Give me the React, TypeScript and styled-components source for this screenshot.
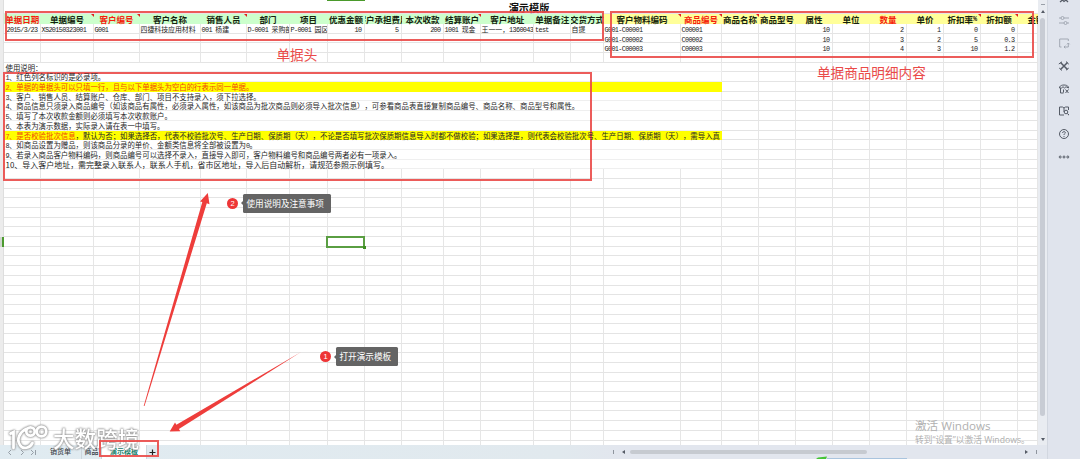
import React from 'react';
import styled, { createGlobalStyle, css } from 'styled-components';

const RED = '#ea4a48';
const COLS = [36.5, 53, 46, 61, 46, 43, 38, 37, 37, 42, 37, 53.5, 36.5, 33, 77, 41, 37, 37, 37, 37, 37, 37, 37, 37, 20.5];
const ROW_H = 9.7;

const Global = createGlobalStyle`
  * { box-sizing: border-box; }
  body {
    margin: 0;
    overflow: hidden;
    font-family: "Noto Sans CJK SC", sans-serif;
    text-spacing-trim: space-all;
  }
`;

const Window = styled.div`
  position: relative;
  display: flex;
  width: 1080px;
  height: 459px;
  overflow: hidden;
  background: #fff;
`;

const Main = styled.div`
  display: flex;
  flex-direction: column;
  width: 1047px;
  height: 459px;
`;

const Upper = styled.div`
  display: flex;
  height: 445px;
  overflow: hidden;
`;

const RowHeads = styled.div`
  flex: none;
  width: 4px;
  padding-top: 237px;
  background: #ececec;
  border-right: 1px solid #dedede;
`;

const ActiveRowMark = styled.div`
  width: 4px;
  height: 10px;
  background: #cfd6cf;
  border-right: 2px solid #4c9a2f;
`;

const Sheet = styled.div`
  width: 1034px;
  flex: none;
  overflow: hidden;
`;

const Title = styled.div`
  height: 14.3px;
  padding-left: 16px;
  border-bottom: 1px solid #e6e6e6;
  text-align: center;
  font-size: 10.2px;
  font-weight: 700;
  line-height: 15.4px;
  color: #111;
`;

const Row = styled.div`
  display: grid;
  grid-template-columns: ${COLS.map((c) => `${c}px`).join(' ')};
  height: ${ROW_H}px;
`;

type CellProps = { $align?: 'left' | 'right' };
const Cell = styled.div<CellProps>`
  height: ${ROW_H}px;
  min-width: 0;
  padding: 0 2px 0 1px;
  overflow-x: clip;
  overflow-y: visible;
  white-space: nowrap;
  border-right: 1px solid #e6e6e6;
  border-bottom: 1px solid #e4e4e4;
  font-size: 6.9px;
  line-height: 10.4px;
  color: #222;
  text-align: ${(p) => p.$align ?? 'left'};
`;

const Latin = styled.span`
  font-family: "Liberation Mono", monospace;
  font-size: 6.8px;
  letter-spacing: -0.64px;
`;

const HeadCell = styled.div<{ $bg: string; $red?: boolean; $note?: boolean }>`
  position: relative;
  display: flex;
  justify-content: center;
  height: ${ROW_H}px;
  min-width: 0;
  overflow-x: clip;
  overflow-y: visible;
  white-space: nowrap;
  background: ${(p) => p.$bg};
  color: ${(p) => (p.$red ? '#f5200c' : '#15230f')};
  font-size: 8.5px;
  font-weight: 700;
  line-height: 11px;
  &:last-child {
    justify-content: flex-start;
    padding-left: 10px;
  }
  ${(p) =>
    p.$note &&
    css`
      &::after {
        content: '';
        position: absolute;
        top: 0;
        right: 0;
        border-top: 3px solid #e02020;
        border-left: 3px solid transparent;
      }
    `}
`;

const Note = styled.div<{ $yellow?: boolean; $red?: boolean; $size?: number }>`
  grid-column: 1 / 17;
  height: ${ROW_H}px;
  padding-left: 1.5px;
  overflow-x: clip;
  overflow-y: visible;
  white-space: nowrap;
  font-size: ${(p) => p.$size ?? 7.41}px;
  line-height: 10.8px;
  color: ${(p) => (p.$red ? '#f0480a' : '#262626')};
  background: ${(p) => (p.$yellow ? '#ffff00' : '#fff')};
  border-bottom: 1px solid ${(p) => (p.$yellow ? '#ffff00' : '#efefef')};
  border-right: 1px solid ${(p) => (p.$yellow ? '#ffff00' : '#ebebeb')};
`;

const NoteText = styled.span`
  position: relative;
  z-index: 1;
`;

const Warm = styled.span`
  color: #f0480a;
`;

const VScroll = styled.div`
  display: flex;
  flex-direction: column;
  align-items: center;
  justify-content: space-between;
  width: 9px;
  padding: 4px 0 4px;
  background: #e9ecf1;
`;

const VTop = styled.div`
  display: flex;
  flex-direction: column;
  align-items: center;
`;

const Dash = styled.div`
  width: 4px;
  height: 1px;
  background: #9aa0a8;
  margin-bottom: 5px;
`;

const Tri = styled.div<{ $dir: 'up' | 'down' | 'left' | 'right' }>`
  width: 0;
  height: 0;
  border: 2px solid transparent;
  border-${(p) => ({ up: 'bottom', down: 'top', left: 'right', right: 'left' })[p.$dir]}: 3px solid #555b66;
  border-${(p) => ({ up: 'top', down: 'bottom', left: 'left', right: 'right' })[p.$dir]}: 0;
`;

const VThumb = styled.div`
  width: 5px;
  height: 398px;
  margin-top: 5px;
  border-radius: 3px;
  background: #c8ccd4;
`;

const Bottom = styled.div`
  display: flex;
  align-items: center;
  height: 14px;
  padding-left: 7px;
  background: linear-gradient(90deg, #e0ebf1 0, #e1e9ee 560px, #e2e6ee 620px);
`;

const NavIcons = styled.svg`
  width: 33px;
  height: 9px;
  flex: none;
`;

const Tab = styled.div<{ $w: number; $active?: boolean }>`
  width: ${(p) => p.$w}px;
  height: 14px;
  flex: none;
  text-align: center;
  white-space: nowrap;
  font-size: 7px;
  line-height: 13.4px;
  font-weight: ${(p) => (p.$active ? 700 : 500)};
  color: ${(p) => (p.$active ? '#12806a' : '#3b4147')};
  background: ${(p) => (p.$active ? '#fff' : 'transparent')};
  border-right: 1px solid #ccd6dc;
`;

const Plus = styled.svg`
  width: 7px;
  height: 7px;
  margin-left: 2px;
  flex: none;
`;

const HBar = styled.div`
  display: flex;
  align-items: center;
  width: 424px;
  margin-left: 457px;
`;

const Tick = styled.div`
  width: 1px;
  height: 4px;
  background: #8f959e;
`;

const Gap = styled.div`
  width: 8px;
`;

const HThumb = styled.div`
  width: 239px;
  height: 4px;
  margin: 0 158px 0 5px;
  border-radius: 2px;
  background: #c6cad0;
`;

const Rail = styled.div`
  display: flex;
  flex-direction: column;
  align-items: center;
  width: 33px;
  background: #e0e4ed;
  border-left: 1px solid #d2d7e0;
`;

const RailIcon = styled.svg<{ $faint?: boolean }>`
  position: relative;
  top: -4.5px;
  width: 10px;
  height: 10px;
  margin-bottom: 12.8px;
  flex: none;
  overflow: visible;
  fill: none;
  stroke: ${(p) => (p.$faint ? '#a2a8b3' : '#555b66')};
  stroke-width: 1;
`;

const Box = styled.div<{ $x: number; $y: number; $w: number; $h: number }>`
  position: absolute;
  left: ${(p) => p.$x}px;
  top: ${(p) => p.$y}px;
  width: ${(p) => p.$w}px;
  height: ${(p) => p.$h}px;
  border: 2px solid ${RED};
  opacity: 0.9;
`;

const Label = styled.div<{ $x: number; $y: number }>`
  position: absolute;
  left: ${(p) => p.$x}px;
  top: ${(p) => p.$y}px;
  font-size: 13.6px;
  line-height: 16px;
  white-space: nowrap;
  color: ${RED};
`;

const Callout = styled.div<{ $x: number; $y: number }>`
  position: absolute;
  left: ${(p) => p.$x}px;
  top: ${(p) => p.$y}px;
  display: flex;
  align-items: center;
`;

const Badge = styled.div`
  width: 11px;
  height: 11px;
  margin-right: 5px;
  border-radius: 50%;
  background: #ee3536;
  color: #fff;
  font: 7.5px/11px "Liberation Sans", sans-serif;
  text-align: center;
`;

const Tip = styled.div<{ $w: number }>`
  position: relative;
  width: ${(p) => p.$w}px;
  height: 19px;
  padding-left: 3.5px;
  border-radius: 1.5px;
  background: #646464;
  color: #fff;
  font-size: 8.6px;
  line-height: 18px;
  white-space: nowrap;
  &::before {
    content: '';
    position: absolute;
    left: -2.5px;
    top: 7.5px;
    border: 2px solid transparent;
    border-left: 0;
    border-right: 2.5px solid #646464;
  }
`;

const Selection = styled.div`
  position: absolute;
  left: 326px;
  top: 236px;
  width: 39px;
  height: 12px;
  border: 2px solid #5a9e42;
  &::after {
    content: '';
    position: absolute;
    right: -3px;
    bottom: -3px;
    width: 3px;
    height: 3px;
    background: #3f8f22;
  }
`;

const TopMark = styled.div`
  position: absolute;
  left: 327px;
  top: 0;
  width: 38px;
  height: 1px;
  background: #4a9a2b;
`;

const Arrows = styled.svg`
  position: absolute;
  left: 0;
  top: 0;
  width: 1080px;
  height: 459px;
  pointer-events: none;
`;

const Activate = styled.div`
  position: absolute;
  left: 915px;
  top: 418px;
  color: #b0b0b0;
  white-space: nowrap;
  font-family: "Open Sans", "Noto Sans CJK SC", sans-serif;
  font-size: 11.6px;
  line-height: 16px;
`;

const ActivateSub = styled.div`
  font-size: 8.7px;
  line-height: 12px;
`;

const Brand = styled.div`
  position: absolute;
  left: 8px;
  top: 422px;
  display: flex;
  align-items: center;
  color: #fff;
  font-size: 21.6px;
  line-height: 32px;
  font-weight: 500;
  white-space: nowrap;
  filter: drop-shadow(0 0 0.8px #8c8c8c) drop-shadow(0 0 0.7px #a0a0a0);
`;

const BrandLogo = styled.svg`
  width: 42px;
  height: 28px;
  margin-right: 3px;
  fill: none;
  stroke: #fff;
  stroke-width: 2.8;
  stroke-linecap: round;
`;

const G = '#ccffcc';
const Y = '#ffff99';
type Head = [string, string, boolean?, boolean?];
const HEADS: Head[] = [
  ['单据日期', G, true],
  ['单据编号', G, false, true],
  ['客户编号', G, true, true],
  ['客户名称', G],
  ['销售人员', G, false, true],
  ['部门', G],
  ['项目', G],
  ['优惠金额', G],
  ['客户承担费用', G],
  ['本次收款', G],
  ['结算账户', G, false, true],
  ['客户地址', G],
  ['单据备注', G],
  ['交货方式', G],
  ['客户物料编码', Y, false, true],
  ['商品编号', Y, true, true],
  ['商品名称', Y, false, true],
  ['商品型号', Y],
  ['属性', Y],
  ['单位', Y],
  ['数量', Y, true],
  ['单价', Y],
  ['折扣率%', Y, false, true],
  ['折扣额', Y, false, true],
  ['金额', Y],
];

const DATA: Record<number, string>[] = [
  {
    0: '2015/3/23', 1: 'XS20150323001', 2: 'G001', 3: '四捷科技应用材料', 4: '001 杨建', 5: 'D-0001 采购部',
    6: 'P-0001 园区', 7: '10', 8: '5', 9: '200', 10: '1001 现金', 11: '王一一，1360043', 12: 'test', 13: '自提',
    14: 'G001-C00001', 15: 'C00001', 18: '10', 20: '2', 21: '1', 22: '0', 23: '0',
  },
  { 14: 'G001-C00002', 15: 'C00002', 18: '10', 20: '3', 21: '2', 22: '5', 23: '0.3' },
  { 14: 'G001-C00003', 15: 'C00003', 18: '10', 20: '4', 21: '3', 22: '10', 23: '1.2' },
  {},
];

const RIGHT = new Set([0, 7, 8, 9, 18, 20, 21, 22, 23]);

const Mixed = ({ text }: { text: string }) => (
  <>
    {text.split(/([\x20-\x7e]+)/).map((part, i) => (i % 2 ? <Latin key={i}>{part}</Latin> : part))}
  </>
);

type NoteRow = { text: string; warm?: string; yellow?: boolean; red?: boolean; size?: number };
const NOTES: NoteRow[] = [
  { text: '1、红色列名标识的是必录项。' },
  { text: '2、单据的单据头可以只填一行，且与以下单据头为空白的行表示同一单据。', yellow: true, red: true },
  { text: '3、客户、销售人员、结算账户、仓库、部门、项目不支持录入，须下拉选择。' },
  { text: '4、商品信息只须录入商品编号（如该商品有属性，必须录入属性，如该商品为批次商品则必须导入批次信息），可参看商品表直接复制商品编号、商品名称、商品型号和属性。' },
  { text: '5、填写了本次收款金额则必须填写本次收款账户。' },
  { text: '6、本表为演示数据，实际录入请在表一中填写。' },
  { warm: '7、是否校验批次信息', text: '，默认为否；如果选择否，代表不校验批次号、生产日期、保质期（天），不论是否填写批次保质期信息导入时都不做校验；如果选择是，则代表会校验批次号、生产日期、保质期（天），需导入真', yellow: true },
  { text: '8、如商品设置为赠品，则该商品分录的单价、金额类信息将全部被设置为0。' },
  { text: '9、若录入商品客户物料编码，则商品编号可以选择不录入，直接导入即可，客户物料编号和商品编号两者必有一项录入。' },
  { text: '10、导入客户地址，需完整录入联系人，联系人手机，省市区地址，导入后自动解析，请规范参照示例填写。', size: 7.98 },
];

const range = (n: number) => Array.from({ length: n }, (_, i) => i);

const EmptyCells = ({ from = 0 }: { from?: number }) => (
  <>
    {range(COLS.length - from).map((i) => (
      <Cell key={i} />
    ))}
  </>
);

export default function App() {
  return (
    <Window>
      <Global />
      <Main>
        <Upper>
          <RowHeads>
            <ActiveRowMark />
          </RowHeads>
          <Sheet>
            <Title>演示模版</Title>
            <Row>
              {HEADS.map(([label, bg, red, note], i) => (
                <HeadCell key={i} $bg={bg} $red={red} $note={note}>
                  <Mixed text={label} />
                </HeadCell>
              ))}
            </Row>
            {DATA.map((row, r) => (
              <Row key={r}>
                {COLS.map((_, c) => (
                  <Cell key={c} $align={RIGHT.has(c) ? 'right' : 'left'}>
                    {row[c] && <Mixed text={row[c]} />}
                  </Cell>
                ))}
              </Row>
            ))}
            <Row>
              <Note>
                <NoteText>使用说明：</NoteText>
              </Note>
              <EmptyCells from={16} />
            </Row>
            {NOTES.map((n, i) => (
              <Row key={i}>
                <Note $yellow={n.yellow} $red={n.red} $size={n.size}>
                  <NoteText>
                    {n.warm && (
                      <Warm>
                        <Mixed text={n.warm} />
                      </Warm>
                    )}
                    {n.size ? n.text : <Mixed text={n.text} />}
                  </NoteText>
                </Note>
                <EmptyCells from={16} />
              </Row>
            ))}
            {range(29).map((i) => (
              <Row key={i}>
                <EmptyCells />
              </Row>
            ))}
          </Sheet>
          <VScroll>
            <VTop>
              <Dash />
              <Tri $dir="up" />
              <VThumb />
            </VTop>
            <Tri $dir="down" />
          </VScroll>
        </Upper>
        <Bottom>
          <NavIcons viewBox="0 0 33 9" fill="none" stroke="#8d969e" strokeWidth="0.9">
            <path d="M4 2 1.500 4.500 4 7M14 2l2.500 2.500L14 7M24 2l2.500 2.500L24 7M28.500 2v5" />
          </NavIcons>
          <Tab $w={42}>销货单</Tab>
          <Tab $w={20}>商品</Tab>
          <Tab $w={45} $active>
            演示模板
          </Tab>
          <Plus viewBox="0 0 7 7" stroke="#222" strokeWidth="1.2">
            <path d="M3.500 .5v6M.5 3.500h6" />
          </Plus>
          <HBar>
            <Tick />
            <Gap />
            <Tri $dir="left" />
            <HThumb />
            <Tri $dir="right" />
            <Gap />
            <Tick />
          </HBar>
        </Bottom>
      </Main>
      <Rail>
        <RailIcon viewBox="0 0 10 10">
          <path d="M1 6 3.500 4 5 5.500 7 4 9 6" strokeWidth="1.300" />
        </RailIcon>
        <RailIcon viewBox="0 0 10 10" $faint>
          <path d="M0 0h2M5 0h5M0 5h5M8 5h2" />
          <circle cx="3.500" cy="0" r="1.500" />
          <circle cx="6.500" cy="5" r="1.500" />
        </RailIcon>
        <RailIcon viewBox="0 0 10 10" $faint>
          <path d="M2.500 6H.7V-2H9.300V0M9.300 2v4H5M8 3.300 9.300 2l1.300 1.300M6.300 4.700 5 6l1.300 1.300" />
        </RailIcon>
        <RailIcon viewBox="0 0 10 10">
          <path d="M1.500 -1.500 8.500 5.500M8.500 -1.500 1.500 5.500" strokeWidth="1.500" />
          <path d="M-.2 0 3-2.200M7-2.500 9.800.2M7 6.200 9.800 4M.2 4 2.800 6.500" />
        </RailIcon>
        <RailIcon viewBox="0 0 10 10">
          <path d="M.5 1C0-3 10-3 9.500 1M.5 1h2L4-.3 5.500 1 7-.3 9.500 1M1.500 1v5h3M4.500 2.500v3M6.500 2.500l3 3.500M9.500 2.500l-3 3.500" />
        </RailIcon>
        <RailIcon viewBox="0 0 10 10">
          <path d="M.5-2H3.500L5-1 6.500-2H9.500V1M.5-2V6H5M5-1V3M9.500 5v1" />
          <circle cx="7" cy="3" r="1.800" />
          <path d="m8.300 4.500 1.700 1.700" />
        </RailIcon>
        <RailIcon viewBox="0 0 10 10">
          <circle cx="5" cy="2" r="4.500" />
          <path d="M3.600 1C3.600-1 6.500-.8 6.300.8 6.200 1.700 5 1.700 5 3M5 4v.9" />
        </RailIcon>
        <RailIcon viewBox="0 0 10 10">
          <circle cx="1.200" cy="2" r="1" />
          <circle cx="5" cy="2" r="1" />
          <circle cx="8.800" cy="2" r="1" />
        </RailIcon>
      </Rail>

      <TopMark />
      <Selection />
      <Activate>
        激活 Windows
        <ActivateSub>转到“设置”以激活 Windows。</ActivateSub>
      </Activate>
      <Brand>
        <BrandLogo viewBox="0 0 42 28">
          <path d="M2.500 9.500 5.500 8V24M12 21C8 15 12 8 18 5M12 21c3 5 10 3 12.500-2" />
          <circle cx="22.500" cy="7.500" r="4.200" />
          <circle cx="33.500" cy="7.500" r="4.800" />
        </BrandLogo>
        大数跨境
      </Brand>
      <Box $x={5} $y={11} $w={599} $h={30} />
      <Box $x={610} $y={11} $w={424} $h={47} />
      <Box $x={3} $y={72} $w={589} $h={109} />
      <Box $x={99} $y={440} $w={60} $h={17} />
      <Label $x={276.5} $y={46}>单据头</Label>
      <Label $x={817} $y={64}>单据商品明细内容</Label>
      <Arrows viewBox="0 0 1080 459" fill="#ee3d3b">
        <path d="M143.700 406 202.300 202.100 200 201.500 207.800 193 209.500 204.200 206.800 203.300 144.500 406Z" />
        <path d="M301 352 178.900 429 180.300 431.200 169.700 431.500 175 422.500 176.400 424.700Z" />
        <path d="M816 459 818 457.500 827 456.500 826 459Z" fill="#45c436" />
        <path d="M827 458h80v1h-80z" fill="#a9c4de" />
      </Arrows>
      <Callout $x={227} $y={193.5}>
        <Badge>2</Badge>
        <Tip $w={87.5}>使用说明及注意事项</Tip>
      </Callout>
      <Callout $x={320} $y={347}>
        <Badge>1</Badge>
        <Tip $w={62}>打开演示模板</Tip>
      </Callout>
    </Window>
  );
}
